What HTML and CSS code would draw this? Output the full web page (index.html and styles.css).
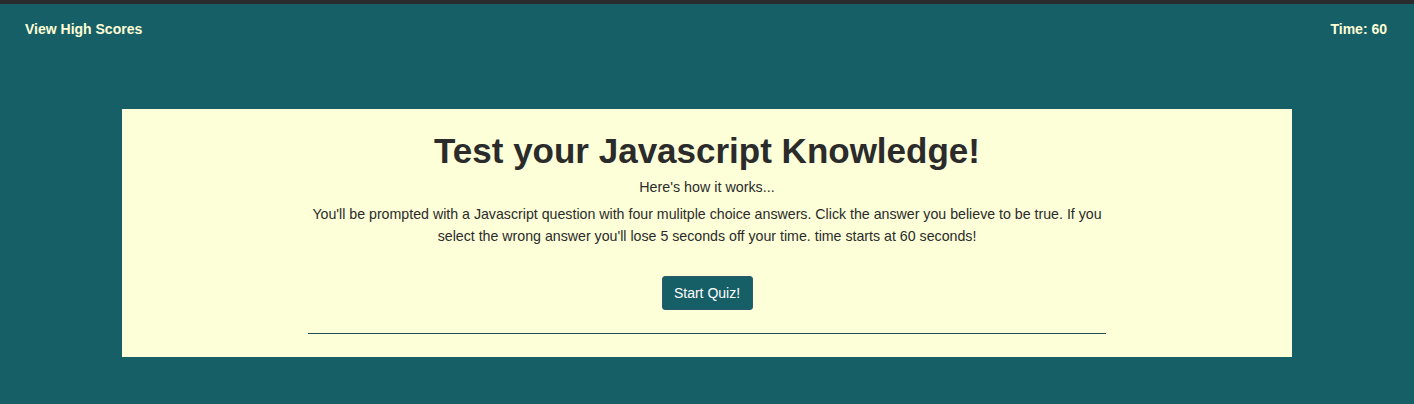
FILE: index.html
```html
<!DOCTYPE html>
<html lang="en">
<head>
<meta charset="utf-8">
<title>Code Quiz</title>
<link rel="stylesheet" href="styles.css">
</head>
<body>
<div class="topbar"></div>
<header class="header">
  <a class="high-scores" href="#">View High Scores</a>
  <span class="timer">Time: 60</span>
</header>
<main class="card">
  <div class="intro">
    <h1 class="title">Test your Javascript Knowledge!</h1>
    <p class="subtitle">Here's how it works...</p>
    <p class="rules">You'll be prompted with a Javascript question with four mulitple choice answers. Click the answer you believe to be true. If you select the wrong answer you'll lose 5 seconds off your time. time starts at 60 seconds!</p>
    <button class="start-btn" type="button">Start Quiz!</button>
    <hr class="divider">
  </div>
</main>
</body>
</html>
```
FILE: styles.css
```css
html, body {
  margin: 0;
  padding: 0;
}
body {
  background: #175f66;
  font-family: "Liberation Sans", Arial, sans-serif;
  color: #2b2b2b;
  min-height: 404px;
}
.topbar {
  height: 4px;
  background: #2b2b2e;
}
.header {
  display: flex;
  justify-content: space-between;
  align-items: center;
  padding: 17px 27px 0 25px;
  height: 15px;
}
.high-scores, .timer {
  color: #fdffd6;
  font-weight: bold;
  font-size: 14px;
  text-decoration: none;
}
.card {
  width: 1170px;
  margin: 73px auto 0;
  background: #fdffd8;
  padding: 18px 0 23px;
  box-sizing: border-box;
}
.intro {
  width: 798px;
  margin: 0 auto;
  display: flex;
  flex-direction: column;
  align-items: center;
  text-align: center;
}
.title {
  margin: 0;
  font-size: 35px;
  line-height: 48px;
  font-weight: bold;
  color: #2b2b2b;
}
.subtitle {
  margin: 2px 0 0;
  font-size: 14.3px;
  line-height: 20px;
}
.rules {
  margin: 6px 0 0;
  font-size: 14.2px;
  line-height: 22px;
}
.start-btn {
  margin-top: 29px;
  background: #175f66;
  color: #fff;
  border: 1px solid #2b5a6e;
  border-radius: 3px;
  font-family: "Liberation Sans", Arial, sans-serif;
  font-size: 14px;
  width: 91px;
  height: 34px;
  padding: 0;
}
.divider {
  width: 100%;
  margin: 23px 0 0;
  border: 0;
  border-top: 1px solid #1f5056;
  height: 0;
}
```
